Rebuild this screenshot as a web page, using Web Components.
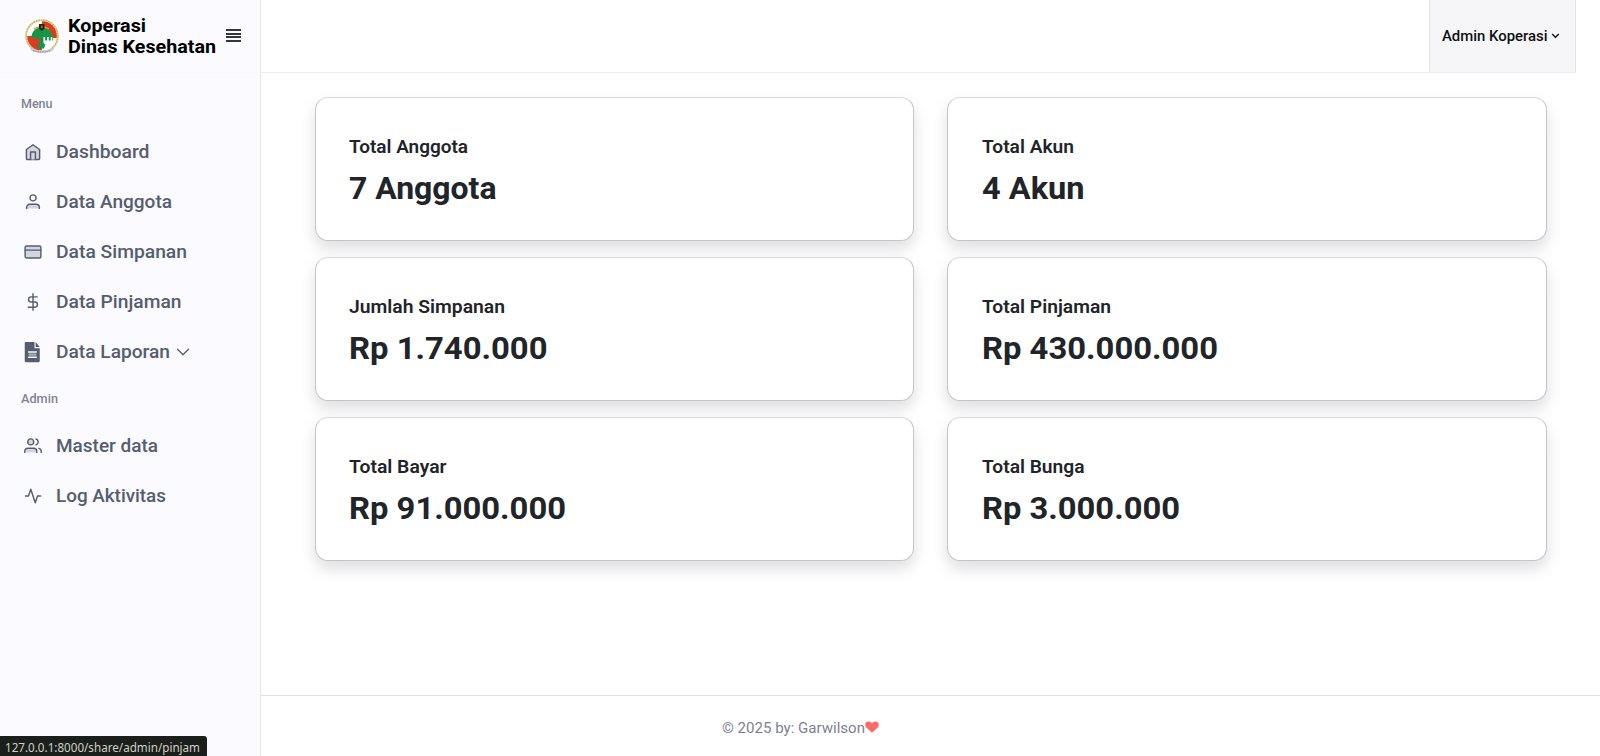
<!DOCTYPE html>
<html lang="id">
<head>
<meta charset="utf-8">
<title>Koperasi Dinas Kesehatan</title>
<style>
html,body{margin:0;height:100%;overflow:hidden;background:#fff;font-family:Roboto,"Noto Sans",sans-serif}
</style>
</head>
<body>
<koperasi-app></koperasi-app>
<script>
const define = (name, html, setup) => customElements.define(name, class extends HTMLElement {
  connectedCallback() {
    if (this.shadowRoot) return;
    const t = document.createElement('template');
    t.innerHTML = html;
    this.attachShadow({mode: 'open'}).append(t.content.cloneNode(true));
    if (setup) setup(this, this.shadowRoot);
  }
});

// One line of text, widened so that it spans the width given in "w".
define('fit-text', `<style>:host{display:block;white-space:nowrap}span{display:inline-block;transform-origin:0 50%}</style><span><slot></slot></span>`, (el, root) => {
  const span = root.querySelector('span'), w = +el.getAttribute('w');
  const own = span.getBoundingClientRect().width;
  span.style.transform = `scaleX(${(w / own).toFixed(4)})`;
  el.style.width = w + 'px';
});

const ICONS = {
  home: '<path d="M3.200 8.700 12 2.300l8.800 6.400V20.500a1.500 1.500 0 0 1-1.500 1.500H4.700a1.500 1.500 0 0 1-1.500-1.500Z" class="d"/><path d="M8.800 22V12h6.400v10" class="d"/>',
  user: '<circle cx="12" cy="6.500" r="4"/><path class="d" d="M3.500 20.500v-1.200A4.300 4.300 0 0 1 7.800 15h8.400a4.300 4.300 0 0 1 4.300 4.300v1.200"/>',
  card: '<rect class="d" x="1.500" y="4" width="21" height="16" rx="2"/><path d="M1.500 9.500h21"/>',
  dollar: '<path d="M12 1v22M17.500 5.200H9.500a3.400 3.400 0 0 0 0 6.800h5a3.400 3.400 0 0 1 0 6.900H5.800"/>',
  file: '<path d="M1-1.500H14v8.500h7V24a1.500 1.500 0 0 1-1.500 1.500h-17A1.500 1.500 0 0 1 1 24Z" fill="currentColor" stroke="none"/><path d="M15.500-1.500l5.500 6.700H15.500Z" fill="currentColor" stroke="none"/><path d="M6 12h10.500M6 19h10.500" stroke="#fafaff" stroke-width="1.800"/><path d="M6 15.500h10.500" stroke="#a9aebb" stroke-width="3" stroke-linecap="butt"/>',
  users: '<circle cx="9" cy="6.500" r="4" class="d"/><path class="d" d="M1 20.500v-1.500a4 4 0 0 1 4-4h8a4 4 0 0 1 4 4v1.500"/><path d="M23 20.500v-1.500a4 4 0 0 0-3-3.870M16 2.700a4 4 0 0 1 0 7.700"/>',
  pulse: '<path d="M22 12h-4l-3 9L9 3l-3 9H2"/>'
};
define('app-icon', `<style>:host{display:block;width:18px;height:18px}svg{display:block;overflow:visible}.d{fill:#d3d5df}</style><svg width="18" height="18" viewBox="0 0 24 24" fill="none" stroke="currentColor" stroke-width="1.900" stroke-linecap="round" stroke-linejoin="round"></svg>`,
  (el, root) => root.querySelector('svg').innerHTML = ICONS[el.getAttribute('name')]);

define('brand-logo', `<style>:host{display:block;width:34px;height:35px}</style>
<svg width="34" height="35" viewBox="0 0 34 35">
<defs><clipPath id="c"><circle cx="17" cy="17" r="14.800"/></clipPath></defs>
<circle cx="17" cy="17" r="15.800" fill="#f4f1d0" stroke="#cbbb62" stroke-width="2" stroke-dasharray="2 .5"/>
<g clip-path="url(#c)"><path fill="#fff" d="M0 0h17v18H0z"/><path fill="#dd3a25" d="M17 0h17v19H17zM0 17h17v14H0z"/><path fill="#fff" d="M17 22h17v9H17z"/>
<path fill="#169447" d="M6.500 17.500C7 12 11.500 8 17 8.500c6 .3 10 4 11 9.500v9H14l-2-5-5-.5z"/>
<path fill="#dd3a25" d="M6 18.500h2.500v2H10v-2h1.800v2h1.500v-2h1.500v5L12 27H6z"/>
<path fill="#fff" d="M18.500 18h1.600v3.500h2V18h1.600v3.500h2V18h1.600v3.500h3.500V27l-4 3h-9l2.500-4.500-1.800-1.500z"/>
<path fill="#169447" d="M13 26.500h7l-1 3h-7z"/></g>
<path d="M9 9.800 13.500 8h6l4.500 1.800" fill="none" stroke="#c2a52d" stroke-width="1.400"/>
<path d="M14 5h5.500v4.500L16.800 12 14 9.500z" fill="#222516"/><path d="M15.800 6.500h2v2l-1 1-1-1z" fill="#7e6b27"/>
<path d="M5 28.500q12 5.500 24 0l-1 3q-11 5-22 0z" fill="#cdcdcf"/><path d="M8 31.300q9 3.300 18 0" fill="none" stroke="#9c9c9f" stroke-width="1.300" stroke-dasharray="1.500 .8"/>
</svg>`);

define('nav-item', `<style>
:host{display:flex;align-items:center;height:50px;padding-left:24.300px;color:#555d6e;font-size:18.500px;font-weight:500;line-height:24px}
app-icon{margin-right:14.200px}svg{margin-left:6px}
</style>`, (el, root) => {
  const icon = document.createElement('app-icon'), t = document.createElement('fit-text');
  icon.setAttribute('name', el.getAttribute('icon'));
  t.setAttribute('w', el.getAttribute('w'));
  t.textContent = el.getAttribute('label');
  root.append(icon, t);
  if (el.hasAttribute('expand')) t.insertAdjacentHTML('afterend', '<svg width="14" height="8" viewBox="0 0 14 8" fill="none" stroke="currentColor" stroke-width="1.300" stroke-linecap="round" stroke-linejoin="round"><path d="M1.500 1.200 7 6.700l5.500-5.500"/></svg>');
});

define('nav-label', `<style>:host{display:block;padding-left:21px;height:16px;line-height:16px;font-size:12.500px;font-weight:500;color:#7f8496}</style><slot></slot>`);

define('side-bar', `<style>
:host{display:flex;flex-direction:column;box-sizing:border-box;width:261px;background:#fafaff;border-right:1px solid #e6e6ee}
header{display:flex;box-sizing:border-box;height:73px;padding:19px 0 0 24.500px;border-bottom:1px solid #f8f8fc}
.name{margin:-3px 0 0 9px;width:158px;font-size:18.600px;font-weight:700;line-height:21px;color:#000}
.burger{display:flex;flex-direction:column;justify-content:space-between;width:15px;height:13px;margin:10px 0 0 .5px}
.burger i{height:1.800px;background:#33363b}
brand-logo{margin-top:-.5px}
.menu{margin-top:23px}.first{margin-top:15px}.admin{margin-top:14px}.last{margin-top:14px}
</style>
<header><brand-logo></brand-logo><div class="name"><fit-text w="78">Koperasi</fit-text><fit-text w="148">Dinas Kesehatan</fit-text></div><div class="burger"><i></i><i></i><i></i><i></i></div></header>
<nav-label class="menu"><fit-text w="31.500">Menu</fit-text></nav-label>
<nav-item class="first" icon="home" label="Dashboard" w="93.500"></nav-item>
<nav-item icon="user" label="Data Anggota" w="116"></nav-item>
<nav-item icon="card" label="Data Simpanan" w="131"></nav-item>
<nav-item icon="dollar" label="Data Pinjaman" w="125.500"></nav-item>
<nav-item icon="file" label="Data Laporan" w="114" expand></nav-item>
<nav-label class="admin"><fit-text w="37">Admin</fit-text></nav-label>
<nav-item class="last" icon="users" label="Master data" w="102"></nav-item>
<nav-item icon="pulse" label="Log Aktivitas" w="110"></nav-item>`);

define('top-bar', `<style>
:host{display:flex;justify-content:flex-end;box-sizing:border-box;height:73px;margin-right:24px;border-bottom:1px solid #ececef}
.user{display:flex;align-items:center;box-sizing:border-box;width:147px;padding:0 0 0 12px;background:#f6f6f9;border:solid #e4e4e8;border-width:0 1px;color:#0e1013;font-size:14.900px;font-weight:500;line-height:20px}
svg{margin-left:3.500px;margin-top:-1px}
</style><div class="user"><fit-text w="105.500">Admin Koperasi</fit-text><svg width="9" height="6" viewBox="0 0 9 6" fill="none" stroke="currentColor" stroke-width="1.300"><path d="M1.200 1 4.500 4.300 7.800 1"/></svg></div>`);

define('stat-card', `<style>
:host{display:block;box-sizing:border-box;height:144px;padding:37px 0 0 33px;border:1px solid #c4c4cd;border-top-color:#dadade;border-radius:13px;background:#fff;box-shadow:0 8px 16px rgba(0,0,0,.13);color:#212429}
:host(:nth-child(even)){padding-left:33.500px}
.title{font-size:18.400px;font-weight:600;line-height:24px}
.value{margin-top:10px;font-size:31.600px;font-weight:700;line-height:40px}
</style><div class="title"><slot name="title"></slot></div><div class="value"><slot name="value"></slot></div>`);

define('page-footer', `<style>
:host{display:flex;box-sizing:border-box;height:61px;padding:20px 0 0 461px;border-top:1px solid #e3e3e7;color:#7d8292;font-size:15.400px;line-height:24px}
svg{margin:5px 0 0 0}
</style><fit-text w="143">© 2025 by: Garwilson</fit-text><svg width="14" height="12" viewBox="0 0 14 12"><path fill="#ff6b66" d="M7 11.700 1.200 6.500C-.6 4.500 0 .5 3.500.5 5.300.5 6.500 1.500 7 2.200 7.500 1.500 8.700.5 10.500.5c3.500 0 4.100 4 2.300 6z"/></svg>`);

define('link-status', `<style>
:host{display:block;position:absolute;left:0;bottom:0;box-sizing:border-box;width:207px;height:20px;padding-left:5px;background:#1b1f1c;border-top-right-radius:3px;color:#cdcfc5;font-family:"Noto Sans",sans-serif;font-size:12px;line-height:23px}
</style><slot></slot>`);

const cards = [['Total Anggota',119,'7 Anggota',147.500],['Total Akun',92,'4 Akun',102.500],['Jumlah Simpanan',156,'Rp 1.740.000',198.500],['Total Pinjaman',129,'Rp 430.000.000',236],['Total Bayar',97.500,'Rp 91.000.000',217],['Total Bunga',102.500,'Rp 3.000.000',198]];
define('koperasi-app', `<style>
:host{display:flex;position:relative;width:1600px;height:756px;background:#fff}
side-bar{flex:none}
.page{flex:1;display:flex;flex-direction:column;min-width:0}
main{flex:1;display:grid;grid-template-columns:599px 600px;column-gap:33px;row-gap:16px;align-content:start;padding:24px 0 0 54px}
</style><side-bar></side-bar><div class="page"><top-bar></top-bar><main>${cards.map(([t,tw,v,vw]) => `<stat-card><fit-text slot="title" w="${tw}">${t}</fit-text><fit-text slot="value" w="${vw}">${v}</fit-text></stat-card>`).join('')}</main><page-footer></page-footer></div><link-status><fit-text w="195">127.0.0.1:8000/share/admin/pinjam</fit-text></link-status>`);
</script>
</body>
</html>
